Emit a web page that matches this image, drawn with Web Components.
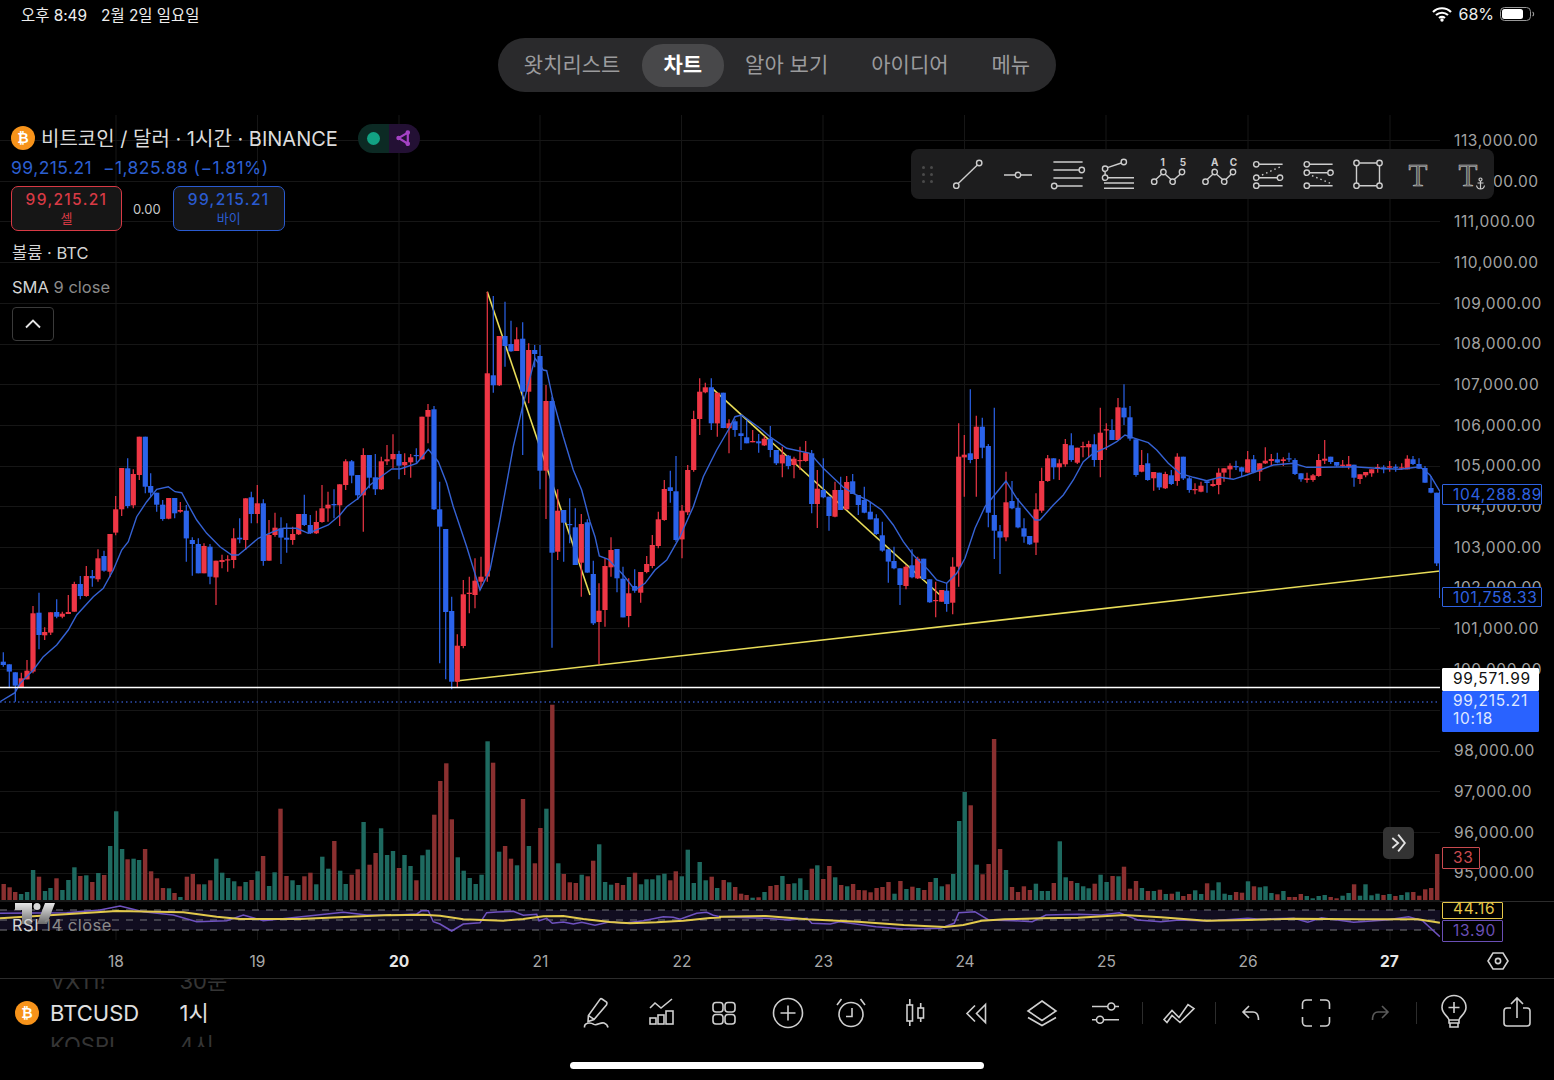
<!DOCTYPE html>
<html lang="ko">
<head>
<meta charset="utf-8">
<title>BTCUSD</title>
<style>
    html, body { margin: 0; background: #000; }
    body {
        display: flex;
        flex-direction: column;
        width: 1554px;
        height: 1080px;
        overflow: hidden;
        font-family: Inter, "Noto Sans CJK KR", sans-serif;
        color: #ddd;
    }
    .dim { color: #8a8a8a; }
    .spread { margin-right: 1px; }
</style>
</head>
<body>
<status-bar>
    <span slot="left">오후 8:49</span>
    <span slot="left">2월 2일 일요일</span>
    <span slot="right">68%</span>
</status-bar>

<nav-pill>
    <nav-tab>왓치리스트</nav-tab>
    <nav-tab active>차트</nav-tab>
    <nav-tab>알아 보기</nav-tab>
    <nav-tab>아이디어</nav-tab>
    <nav-tab>메뉴</nav-tab>
</nav-pill>

<chart-pane>
    <price-axis slot="axis">
        <value-tag top="369" width="100" height="21" tone="#2f62e0">104,288.89</value-tag>
        <value-tag top="472" width="100" height="20" tone="#2f62e0" style="--pt:2px">101,758.33</value-tag>
        <value-tag top="553" width="97" height="23" tone="#fff" fill="#fff" ink="#111" style="--pb:2px">99,571.99</value-tag>
        <value-tag top="576" width="97" height="41" tone="#2962ff" fill="#2962ff" ink="#dfe7ff" style="--pb:3px">99,215.21<br>10:18</value-tag>
        <value-tag top="732" width="38" height="22" tone="#c94a4f">33</value-tag>
        <value-tag top="787" width="61" height="17" tone="#e6c84a" style="--pb:3px">44.16</value-tag>
        <value-tag top="805" width="61" height="22" tone="#6a4fb5">13.90</value-tag>
    </price-axis>

    <chart-legend slot="overlay">
        <legend-title>비트코인 / 달러 · 1시간 · BINANCE</legend-title>
        <legend-line style="--mt:4px;--ink:#2c5fd0;--size:17.5px;--track:.45px">99,215.21&nbsp; −1,825.88 (−1.81%)</legend-line>
        <quote-row style="--mt:7px">
            <quote-box tone="#d83a45" label="셀" style="--w:111px">99,215.21</quote-box>
            <span class="spread">0.00</span>
            <quote-box tone="#2a5bd0" label="바이">99,215.21</quote-box>
        </quote-row>
        <legend-line style="--mt:11px;--ml:1px">볼륨 · BTC</legend-line>
        <legend-line style="--mt:12px;--ml:1px">SMA <span class="dim">9 close</span></legend-line>
        <collapse-button style="--mt:9px"></collapse-button>
    </chart-legend>

    <draw-toolbar slot="overlay"></draw-toolbar>
    <next-button slot="overlay"></next-button>
    <tv-logo slot="overlay"></tv-logo>
    <rsi-label slot="overlay">RSI <span class="dim">14 close</span></rsi-label>
</chart-pane>

<time-axis></time-axis>
<bottom-bar></bottom-bar>

<script>
// scale and offset of the crops the chart was read from
const CANDLE_SETS = [
    { x0: 0, xs: 3, y0: 400, ys: 3, data: `10b785,795,757,800 28b793,815,793,865 46b817,857,817,905 64r835,862,818,862 81r812,838,780,838 99r640,815,618,820 117b638,705,578,748 134r696,706,682,720 152r637,698,637,705 170b636,650,598,655 187r641,650,635,655 205r636,642,585,640 223r552,635,545,635 241b552,588,528,598 259r528,588,498,590 277b528,535,510,560 294r475,538,448,545 312b468,512,452,515 330r402,515,402,532 347r328,398,288,406 365r204,328,204,348 383b205,318,175,325 400r222,316,208,325 418r110,225,110,240 436b110,260,110,280 452b258,278,220,290 470b278,314,278,335 488b314,357,300,362 506r294,356,294,358 524b294,340,294,355 541r330,335,306,338 559b332,415,315,485 577b420,432,412,527 595b432,520,415,520 612r438,520,430,520 630b440,530,432,553 648r482,532,482,615 666r480,486,464,505 683r478,481,466,515 701r415,480,385,505 719b413,418,355,430 737r295,420,295,450 754b292,342,275,370 772r310,342,255,370 790b310,483,298,497 807r405,482,360,482 825r383,405,338,410 843b385,413,352,492 860b413,419,370,458 878r402,420,380,434 896r342,403,342,405 913b342,375,284,378 931b375,400,345,402 949r366,400,332,402 966r325,366,255,368 984r314,325,275,365 1002b312,316,268,355 1019r253,316,253,378 1037r184,255,178,270 1055b184,227,180,250 1073b225,286,225,300 1090r165,286,145,395 1108b165,233,165,265 1126b232,268,162,285 1144r184,268,170,270 1161r178,184,135,195 1179r162,178,103,205 1197b162,197,152,238 1214r186,196,160,225 1232r172,187,162,233 1249b165,168,145,188 1266r50,178,50,178 1284r30,50,12,130 1302b28,328,18,330 1319b328,380,245,790 1337b387,636,387,838 1355b633,845,590,868 1372r737,845,703,862 1390r583,738,540,745 1408r578,582,530,640 1425r542,585,475,625 1443r530,545,470,565` },
    { x0: 480, xs: 3, y0: 280, ys: 3, data: `22r280,890,35,905 40b286,316,48,338 58r168,316,168,318 75b168,198,65,260 93b192,214,122,215 110r178,213,142,213 128b176,335,127,525 146r210,335,190,370 164b210,222,195,262 180b228,572,195,628 198r363,572,315,717 216b363,818,350,1103 233r692,815,628,840 251b690,728,690,845 269b732,734,655,790 286b742,855,685,855 304r732,848,702,950 322b727,878,718,878 340b882,1030,842,1035 357r992,1026,910,1152 375r858,990,835,1040 393r810,862,772,890 411b807,895,807,937 429b896,1012,860,1012 446r940,1008,895,1042 464b918,932,868,938 482r876,938,876,968 500r852,876,828,880 517r795,858,765,865 535r718,798,695,805 553r627,720,600,722 571b622,633,572,668 588b634,780,528,785 606r692,778,675,835 623r570,697,555,705 641r417,570,392,575 659r335,417,295,465 676r322,337,308,340 694b322,430,295,450 712r338,430,338,470 730b338,444,338,445 747r430,445,418,520 765b424,450,418,470 783b460,468,405,510 800b472,490,420,490 818r483,487,450,487 836b484,490,462,518 853r476,496,468,498 871b476,510,438,532 889b510,550,510,555 907r524,550,500,592 925b527,558,525,568 942r536,555,530,595 960r540,543,500,570 977r518,543,483,545 995b520,672,510,700 1012r626,672,570,744 1030b630,652,535,655 1047b650,708,650,752 1065r630,710,605,712 1082b630,690,590,690 1100r606,688,588,690 1118b604,642,582,642 1135b645,675,645,705 1153b660,698,620,700 1171b695,718,665,718 1189b715,762,703,765 1207b766,812,725,815 1225b808,845,808,908 1242b843,865,800,868 1260b865,915,865,975 1278r860,918,855,928 1296b856,892,808,895 1313r836,895,830,897 1331b836,897,836,900 1349b898,967,898,968 1367r960,963,905,1012` },
    { x0: 940, xs: 3, y0: 370, ys: 3, data: `5r660,695,660,695 20b662,702,640,725 38r590,698,562,733 56r260,590,160,650 73r254,262,195,380 91b250,270,58,280 109r170,267,137,380 127b170,233,143,265 145b228,428,222,472 163b435,482,113,567 180b484,503,465,612 198r397,502,305,514 216b393,415,333,418 234b413,472,385,475 252b475,500,445,518 269b498,523,498,525 288r418,518,370,555 305r333,422,293,428 323r265,333,255,335 341b265,292,265,328 358r280,292,268,330 376r222,283,207,290 394b226,270,190,275 412r233,278,233,282 429r228,232,215,262 446r222,232,212,262 463b223,270,193,290 481r188,270,113,322 499r178,181,160,240 516b180,210,148,210 534r112,210,84,210 552b113,142,43,165 570b142,206,108,212 588b208,315,208,320 605r285,305,240,307 623b280,330,250,332 641r306,325,306,362 658b308,352,308,360 676r312,355,305,357 694b316,342,300,345 712r260,333,250,347 730b260,325,260,330 748b325,360,320,368 765r357,361,340,373 783r347,365,335,367 801b334,339,334,368 819r342,348,328,350 836r308,345,295,373 852r295,308,295,335 870r287,298,280,325 888b288,292,272,300 905b292,305,290,318 923r268,308,243,308 941b268,307,255,310 959r280,305,280,333 976r272,280,232,282 994r267,273,252,288 1012b268,278,248,280 1030r268,273,262,288 1047b265,268,248,276 1065b270,312,265,315 1083b310,328,310,335 1101r325,330,308,338 1119r316,330,312,335 1136r270,318,252,320 1154r266,272,210,282 1172b260,276,260,282 1190b276,287,276,290 1208r284,287,270,292 1226r283,290,258,298 1242b284,323,284,350 1260r313,327,313,342 1277r306,316,306,322 1295r298,310,298,320 1313r291,295,282,308 1331b292,298,286,310 1349r289,293,273,305 1367b290,293,283,305 1385r292,296,280,300 1402r266,298,256,298 1419b268,282,258,285 1437b282,296,265,297 1455b294,338,288,338 1473b354,368,318,370 1490b368,580,368,588` }
];

const VOLUME_SETS = [
    { x0: 0, xs: 2.178, y0: 700, ys: 3, data: `8r552 21r562 33r576 46g582 59g576 72g510 85r530 98g573 110g564 123r535 136g570 149g540 162g502 175r528 188g526 201r546 214g519 227r525 240g438 253g334 266g447 278r478 291g476 303g480 316r447 329r514 342r535 355r564 368g565 380r579 393g591 407r530 420r522 433r553 445g553 458r541 471g476 484g518 497g534 510g544 522r559 535g546 548r540 561g514 573r468 586g558 598g517 611r326 624r528 637g541 650g555 663r529 676r518 689g553 702g470 715g506 728r423 741g512 753g552 766r524 779r508 792g366 805r494 818r459 830g385 843g465 856g453 869r504 881g465 894g498 907r541 920g466 932g449 946r344 959r243 972r190 984r358 997g472 1010g512 1023g534 1036g552 1049g524 1062g124 1074r188 1087g455 1100r438 1113r476 1126g496 1139r297 1152g438 1165r490 1177r384 1190g326 1203r14 1216g490 1228r522 1241r547 1254r549 1267g524 1280r529 1292r482 1305g433 1318g546 1331g554 1344r549 1357r555 1370g531 1383r518 1396g553 1408g538 1421g538 1434g526 1447g521 1460r541 1472r514 1485g529 1498g449 1511g549 1524g486 1537g541 1550r530 1562g564` },
    { x0: 720, xs: 2.178, y0: 730, ys: 3, data: `8r450 20g457 33r471 46r491 58r495 71g503 84r502 97g486 110r468 123r465 136g438 149r462 162g460 175g445 188g480 200r416 212g406 225r447 238r408 251g442 264r465 277g469 290r462 302r480 315r481 328r487 341r474 354r471 367r456 380g491 393r453 406g477 419r470 432g474 445r480 458r456 470g444 483g469 496r463 508g432 521g273 533g186 546r226 559g404 572r433 585r402 597r27 610r357 623g420 636r471 649r486 662r469 675r480 688g461 701g483 714g483 727r459 740g334 753g442 765r453 778g459 791g469 803g475 816r461 829g434 842g456 855r438 868g439 880r410 893r476 906r453 919g474 932r483 945g483 958r479 971g492 984r491 997g485 1009r498 1022r492 1035g481 1048g492 1061r460 1073g481 1086g457 1099g491 1111g495 1124r486 1137r488 1150g454 1163r469 1176g472 1188g469 1201g489 1214r493 1227g483 1240r501 1252r501 1265r492 1278g498 1291g505 1304g498 1317g495 1330r501 1343r505 1356g497 1369g489 1381r463 1394g497 1406g463 1419g496 1432g491 1445r495 1458g492 1471r498 1484g495 1497g487 1510r486 1523r497 1536r478 1549r474 1562r372` }
];

const SMA_PARTS = [
    [0, 3, 400, 3, '0,905 45,878 60,850 100,810 130,770 170,735 205,690 230,645 280,590 310,565 340,510 365,450 385,425 410,350 440,305 470,268 505,260 525,275 545,278 565,315 590,360 620,400 660,440 695,465 715,465 745,440 775,415 820,395 850,385 890,385 925,400 960,385 985,375 1020,345 1040,320 1075,295 1110,255 1150,225 1175,207 1200,207 1250,190 1285,148 1315,185 1340,250 1360,320 1400,440 1440,570'],
    [480, 3, 280, 3, '0,930 30,870 60,720 100,500 130,370 165,235 190,270 200,272 218,355 250,470 280,570 305,630 330,725 345,770 358,828 385,838 430,885 465,930 495,910 525,870 560,840 600,770 640,680 670,590 710,510 745,450 765,410 785,405 840,445 870,470 920,505 990,520 1030,565 1090,622 1120,640 1165,662 1205,690 1240,735 1270,785 1300,825 1345,870 1370,900'],
    [940, 3, 370, 3, '20,640 50,610 75,565 105,475 135,410 198,333 230,385 285,450 300,450 340,405 370,375 400,330 430,275 460,250 500,232 530,215 555,195 585,205 625,218 650,240 685,280 720,310 760,322 800,332 840,322 880,328 920,315 960,300 1000,285 1060,280 1100,292 1150,292 1240,290 1310,295 1380,298 1440,290 1470,315 1500,365']
];

const RSI_YELLOW = [
    [0, 3, 880, 3, '0,115 160,105 350,93 550,97 650,110 720,117 900,117 1050,110 1170,105'],
    [390, 3, 900, 3, '0,46 100,44 150,47 220,58 340,62 400,57 460,49 520,48 580,57 660,66 720,70 800,67 880,62 960,54 990,53'],
    [720, 2.178, 730, 3, '0,560 100,558 190,568 300,575 400,585 490,591 530,585 570,572 620,568 700,565 780,563 880,555 960,562 1060,572 1150,570 1250,566 1400,568 1520,568 1568,578']
];

const RSI_PURPLE = [
    [0, 3, 880, 3, '0,100 200,98 300,90 360,78 430,95 520,105 590,125 680,122 730,105 790,122 890,112 1030,97 1100,105 1170,105'],
    [390, 3, 900, 3, '0,46 80,42 95,32 115,32 130,65 150,72 185,93 220,72 270,68 290,38 320,36 370,34 400,46 440,43 447,62 470,55 487,70 520,66 550,72 575,67 615,76 660,65 700,70 760,62 820,50 850,52 870,58 920,40 950,37 970,46 990,50'],
    [720, 2.178, 730, 3, '0,560 100,565 150,570 190,565 200,580 240,582 260,575 340,590 400,597 480,595 510,580 520,548 555,545 585,570 640,572 680,575 710,555 780,553 830,555 870,548 910,570 960,575 1000,570 1060,573 1150,565 1170,567 1250,565 1280,577 1310,563 1380,577 1450,570 1500,560 1530,572 1568,620']
];

const DAY_X = [116, 257.5, 399, 540, 681.5, 823, 964.5, 1106, 1248, 1390];
const knob = (x, y, r = 2.7) => `<circle cx="${x}" cy="${y}" r="${r}"/>`;

const ICONS = {
    // drawing toolbar
    trend: `<path d="M-9.8 9.6 L9.4 -9"/>${knob(11.2, -11)}${knob(-11.7, 11.7)}`,
    ray: `<path d="M-14 1 H-2.5 M2.5 1 H14"/>${knob(0, 1)}`,
    channel: `<path d="M-14.6 -12 H14.6 M-14.6 -4 H11 M-14.6 4 H14.6 M-11 12 H14.6"/>${knob(13.8, -4)}${knob(-13.8, 12)}`,
    fib: `<path d="M3.3 -11 L-10.5 -6.3 M-12.9 -2.6 V1 M-10 3.7 H16 M-14 9 H16 M-14 14.3 H16"/>${knob(5.8, -12)}${knob(-12.9, -5.3)}${knob(-12.9, 3.7)}`,
    xabcd: `<path d="M-12.2 5.6 L-6.2 0 M-3 0 L3 5.6 M6.2 5.6 L12.4 0"/>${knob(-13.8, 7.7)}${knob(-4.6, -2)}${knob(4.6, 7.7)}${knob(14, -2)}<text x="-5.4" y="-8" class="mini">1</text><text x="15" y="-8" class="mini">5</text>`,
    abcd: `<path d="M-10.9 5.6 L-4.9 0 M-1.7 0 L4.6 5.6 M7.8 5.6 L13.4 0"/>${knob(-12.5, 7.7)}${knob(-3.3, -2)}${knob(6.2, 7.7)}${knob(15, -2)}<text x="-3.3" y="-8" class="mini">A</text><text x="15.4" y="-8" class="mini">C</text>`,
    pitch: `<path d="M-9 -9.7 H14.6 M-9 3.7 H9.3 M-9 11.7 H14.6"/><path d="M-6 1 L12.5 -7.3" stroke-dasharray="1.5 3"/>${knob(-11.7, -9.7)}${knob(-11.7, 3.7)}${knob(12, 3.7)}${knob(-11.7, 11.7)}`,
    pitchfan: `<path d="M-8.5 -9.7 H14.6 M-8.5 -1.3 H9.8 M-8.5 11.7 H14.6"/><path d="M-6 1.7 L12.5 9.3" stroke-dasharray="1.5 3"/>${knob(-11.2, -9.7)}${knob(-11.2, -1.3)}${knob(12.5, -1.3)}${knob(-11.2, 11.7)}`,
    rect: `<path d="M-9 -11 H9 M-9 11.7 H9 M-11.5 -8.4 V9 M11.5 -8.4 V9"/>${knob(-11.5, -11)}${knob(11.5, -11)}${knob(-11.5, 11.7)}${knob(11.5, 11.7)}`,
    text: `<text x="0" y="11.5" class="big">T</text>`,
    anchored: `<text x="0" y="11.5" class="big">T</text><g stroke-width="1.2" transform="translate(6.5 0)"><circle cx="6" cy="5.5" r="1.5"/><path d="M6 7 V15 M3 9 H9 M2 11.5 C2.5 14 4.5 15 6 15 C7.5 15 9.5 14 10 11.5"/></g>`,
    // bottom bar
    pen: `<path d="M5 -14 L9.5 -11 C10.2 -10 10 -9 9.4 -8 L-3 6.5 L-9 8.5 L-8.6 2.6 L3 -13.6 C3.6 -14.4 4.4 -14.4 5 -14 Z M-8 2.8 L-3 6.4"/><path d="M-12.5 14.5 C-13 9.5 -7 9 -3 11.4 C0 13 3.4 9 7 10 C9.4 11 10.6 12.5 11 14.5"/>`,
    indicators: `<path d="M-11 -5 L-6 -10 L0 -5 L11 -14"/><rect x="-11" y="5" width="6" height="6"/><rect x="-3" y="2" width="6" height="9"/><rect x="5" y="-2" width="7" height="13"/>`,
    grid: `<rect x="-11" y="-10.5" width="10" height="9.5" rx="3"/><rect x="1" y="-10.5" width="10" height="9.5" rx="3"/><rect x="-11" y="1.5" width="10" height="9.5" rx="3"/><rect x="1" y="1.5" width="10" height="9.5" rx="3"/>`,
    plus: `<circle r="14.5"/><path d="M0 -7.5 V7.5 M-7.5 0 H7.5"/>`,
    alarm: `<circle cy="1.5" r="12"/><path d="M1 -5 V3.5 H-5 M-14 -8 L-9.5 -14 M14 -8 L9.5 -14"/>`,
    candles: `<rect x="-8" y="-8" width="5.5" height="16"/><rect x="3" y="-5" width="5.5" height="10"/><path d="M-5.2 -14 V-8 M-5.2 8 V13 M5.7 -10 V-5 M5.7 5 V9"/>`,
    rewind: `<path d="M-3 -7.5 L-11 .5 L-3 8.5 M7.5 -8.5 L-1.5 .5 L7.5 9.5 Z"/>`,
    layers: `<path d="M0 -12 L14 -2 L0 7.5 L-14 -2 Z M-14 4.5 L0 12.5 L14 4.5"/>`,
    sliders: `<path d="M-13 -6.5 H2.8 M9.8 -6.5 H14 M-13 6.7 H-8.5 M-1.5 6.7 H14"/><circle cx="6.3" cy="-6.5" r="3.5"/><circle cx="-5" cy="6.7" r="3.5"/>`,
    zigzag: `<path d="M-15 6.5 L-7 -2.5 L0 4.5 L9 -8.5 L15 -4.5 L1 9.5 L-7 2.5 L-12 9.5 Z"/>`,
    undo: `<path d="M-3 -7 L-9 -1 L-3 5 M-9 -1 H1 C4.5 -1 6.5 2 6.5 7"/>`,
    frame: `<path d="M-4 -13 H-9.5 A4 4 0 0 0 -13.5 -9 V-4 M4 -13 H9.5 A4 4 0 0 1 13.5 -9 V-4 M-4 13 H-9.5 A4 4 0 0 1 -13.5 9 V4 M4 13 H9.5 A4 4 0 0 0 13.5 9 V4"/>`,
    redo: `<path d="M3 -7 L9 -1 L3 5 M9 -1 H-1 C-4.5 -1 -6.5 2 -6.5 7"/>`,
    bulb: `<path d="M-5 7 C-5 4 -12 1 -12 -5.5 A12 12 0 0 1 12 -5.5 C12 1 5 4 5 7 Z M-5 7 V10 H5 V7 M-4 10 V14 H4 V10 M0 -11 V0 M-5.5 -5.5 H5.5"/>`,
    share: `<path d="M-6 -5 H-10 A3 3 0 0 0 -13 -2 V10 A3 3 0 0 0 -10 13 H10 A3 3 0 0 0 13 10 V-2 A3 3 0 0 0 10 -5 H6 M0 5 V-15 M-6 -9 L0 -15 L6 -9"/>`,
    hexgear: `<path d="M-5 -8 H5 L10 0 L5 8 H-5 L-10 0 Z"/><circle r="2.6"/>`,
    chevrons: `<path d="M-8 -6 L-1 0 L-8 6 M-1 -10 L7 0 L-1 10"/>`,
    chevronUp: `<path d="M-7 3.5 L0 -3.5 L7 3.5"/>`
};

const TOOLBAR = ['trend', 'ray', 'channel', 'fib', 'xabcd', 'abcd', 'pitch', 'pitchfan', 'rect', 'text', 'anchored'];

function points(parts) {
    return parts.map(([x0, xs, y0, ys, list]) => list.split(' ').map(p => {
        const [x, y] = p.split(',').map(Number);
        return `${(x0 + x / xs).toFixed(1)},${(y0 + y / ys).toFixed(1)}`;
    }).join(' ')).join(' ');
}

class StatusBar extends HTMLElement {
    constructor() {
        super();
        this.attachShadow({ mode: 'open' });
    }

    connectedCallback() {
        this.shadowRoot.innerHTML = `
            <style>
                :host {
                    display: flex;
                    align-items: center;
                    justify-content: space-between;
                    height: 30px;
                    box-sizing: border-box;
                    padding: 0 19px 2px 21px;
                    font-size: 15.4px;
                    color: #eee;
                }
                .side { display: flex; align-items: center; }
                .left { gap: 14px; }
                .right { gap: 6px; font-size: 16px; }
                svg { display: block; }
            </style>
            <div class="side left"><slot name="left"></slot></div>
            <div class="side right">
                <svg width="20" height="16" viewBox="0 0 20 16">
                    <path d="M1 6 C6 1 14 1 19 6 M4 9 C7.5 6 12.5 6 16 9 M7 12 C8.8 10.6 11.2 10.6 13 12" fill="none" stroke="#fff" stroke-width="2.2"/>
                    <circle cx="10" cy="14" r="1.7" fill="#fff"/>
                </svg>
                <slot name="right"></slot>
                <svg width="35" height="16" viewBox="0 0 35 16">
                    <rect x=".5" y="1.5" width="30" height="13" rx="4" fill="none" stroke="#999"/>
                    <rect x="2" y="3" width="21" height="10" rx="2.5" fill="#fff"/>
                    <path d="M32.5 6 C34 6.5 34 9.5 32.5 10" fill="none" stroke="#999" stroke-width="1.2"/>
                </svg>
            </div>
        `;
    }
}

class NavPill extends HTMLElement {
    constructor() {
        super();
        this.attachShadow({ mode: 'open' });
    }

    connectedCallback() {
        this.shadowRoot.innerHTML = `
            <style>
                :host {
                    display: flex;
                    justify-content: center;
                    height: 77px;
                    padding-top: 8px;
                }
                .pill {
                    display: flex;
                    align-items: center;
                    height: 54px;
                    box-sizing: border-box;
                    padding: 0 4px;
                    border-radius: 27px;
                    background: #2a2a2c;
                }
            </style>
            <div class="pill"><slot></slot></div>
        `;
    }
}

class NavTab extends HTMLElement {
    constructor() {
        super();
        this.attachShadow({ mode: 'open' });
    }

    connectedCallback() {
        this.shadowRoot.innerHTML = `
            <style>
                :host {
                    display: flex;
                    align-items: center;
                    height: 43px;
                    box-sizing: border-box;
                    padding: 0 21.5px 4px;
                    border-radius: 21px;
                    font-size: 21px;
                    color: #9b9b9d;
                }
                :host([active]) {
                    background: #48484a;
                    color: #fff;
                    font-weight: 700;
                }
            </style>
            <slot></slot>
        `;
    }
}

class ChartPane extends HTMLElement {
    constructor() {
        super();
        this.attachShadow({ mode: 'open' });
    }

    connectedCallback() {
        this.shadowRoot.innerHTML = `
            <style>
                :host {
                    display: flex;
                    position: relative;
                    height: 825px;
                    flex: none;
                }
            </style>
            <price-chart></price-chart>
            <slot name="axis"></slot>
            <slot name="overlay"></slot>
        `;
    }
}

class PriceChart extends HTMLElement {
    constructor() {
        super();
        this.attachShadow({ mode: 'open' });
    }

    connectedCallback() {
        this.shadowRoot.innerHTML = `
            <style>
                :host { display: block; width: 1440px; height: 825px; flex: none; }
                svg { display: block; }
            </style>
            <svg width="1440" height="825" viewBox="0 115 1440 825">${this.drawing()}</svg>
        `;
    }

    drawing() {
        let out = '';

        // grid
        DAY_X.forEach(x => {
            out += `<path d="M${x} 115 V940" stroke="#161616"/>`;
        });
        for (let i = 0; i < 19; i++) {
            const y = Math.round(140 + i * 40.7) + .5;
            out += `<path d="M0 ${y} H1440" stroke="#161616"/>`;
        }

        // volume
        VOLUME_SETS.forEach(set => {
            for (const m of set.data.matchAll(/(\d+)([rg])(\d+)/g)) {
                const x = set.x0 + m[1] / set.xs;
                const top = set.y0 + m[3] / set.ys;
                out += `<rect x="${(x - 2.2).toFixed(1)}" y="${top.toFixed(1)}" width="4.4" height="${(900 - top).toFixed(1)}" fill="${m[2] === 'r' ? '#8a3030' : '#1e6a60'}"/>`;
            }
        });
        out += '<path d="M0 901 H1440" stroke="#2c2c2c"/>';

        // rsi pane
        out += '<rect x="0" y="910" width="1440" height="20" fill="#110d20"/>';
        [910, 920, 930].forEach(y => {
            out += `<path d="M0 ${y} H1440" stroke="#77777c" stroke-dasharray="7 7"/>`;
        });
        out += `<polyline points="${points(RSI_PURPLE)}" fill="none" stroke="#6f52c0" stroke-width="1.5"/>`;
        out += `<polyline points="${points(RSI_YELLOW)}" fill="none" stroke="#e2c94c" stroke-width="1.9"/>`;

        // drawn trend lines sit under the candles
        const trend = 'fill="none" stroke="#e8dc58" stroke-width="1.6"';
        out += `<path d="M487.3 291.7 L590 595" ${trend}/>`;
        out += `<path d="M713.3 389.3 L940 595" ${trend}/>`;
        out += `<path d="M456 681 L1440 571" ${trend}/>`;

        // candles
        CANDLE_SETS.forEach(set => {
            for (const m of set.data.matchAll(/(\d+)([rb])(\d+),(\d+),(\d+),(\d+)/g)) {
                const x = set.x0 + m[1] / set.xs;
                const [top, bot, hi, lo] = [m[3], m[4], m[5], m[6]].map(v => set.y0 + v / set.ys);
                const col = m[2] === 'r' ? '#ee3645' : '#2b63ea';
                out += `<path d="M${x.toFixed(1)} ${hi.toFixed(1)} V${lo.toFixed(1)}" stroke="${col}" stroke-width="1.2"/>`;
                out += `<rect x="${(x - 2.6).toFixed(1)}" y="${top.toFixed(1)}" width="5.2" height="${Math.max(bot - top, 1.2).toFixed(1)}" fill="${col}"/>`;
            }
        });

        out += `<polyline points="${points(SMA_PARTS)}" fill="none" stroke="#3562d4" stroke-width="1.4"/>`;

        // price lines
        out += '<path d="M1439.5 492 V598" stroke="#2f62e0"/>';
        out += '<path d="M0 702 H1440" stroke="#2f4fb0" stroke-width="1.4" stroke-dasharray="1.5 3"/>';
        out += '<path d="M0 687.5 H1440" stroke="#fff" stroke-width="1.6"/>';
        return out;
    }
}

class PriceAxis extends HTMLElement {
    constructor() {
        super();
        this.attachShadow({ mode: 'open' });
    }

    connectedCallback() {
        const rows = [];
        for (let p = 113; p >= 95; p--) {
            rows.push(`<div class="row">${p},000.00</div>`);
        }
        this.shadowRoot.innerHTML = `
            <style>
                :host {
                    display: flex;
                    flex-direction: column;
                    position: relative;
                    width: 114px;
                    height: 825px;
                    box-sizing: border-box;
                    padding-top: 5px;
                    font-size: 15.5px;
                    color: #a3a3a3;
                }
                .row {
                    flex: none;
                    display: flex;
                    align-items: center;
                    height: 40.7px;
                    padding-left: 14px;
                    letter-spacing: .6px;
                }
                .sep {
                    position: absolute;
                    left: 0;
                    right: 0;
                    top: 786px;
                    height: 1px;
                    background: #2c2c2c;
                }
            </style>
            ${rows.join('')}
            <div class="sep"></div>
            <slot></slot>
        `;
    }
}

class ValueTag extends HTMLElement {
    constructor() {
        super();
        this.attachShadow({ mode: 'open' });
    }

    connectedCallback() {
        const tone = this.getAttribute('tone');
        const fill = this.getAttribute('fill') || '#000';
        const ink = this.getAttribute('ink') || tone;
        this.shadowRoot.innerHTML = `
            <style>
                :host {
                    position: absolute;
                    left: 2px;
                    top: ${this.getAttribute('top')}px;
                    width: ${this.getAttribute('width')}px;
                    height: ${this.getAttribute('height')}px;
                    box-sizing: border-box;
                    display: flex;
                    align-items: center;
                    padding: var(--pt, 0) 0 var(--pb, 0) 10px;
                    border: 1px solid ${tone};
                    border-radius: 1px;
                    background: ${fill};
                    color: ${ink};
                    font-size: 15.5px;
                    line-height: 18px;
                    letter-spacing: .75px;
                }
            </style>
            <div><slot></slot></div>
        `;
    }
}

class ChartLegend extends HTMLElement {
    constructor() {
        super();
        this.attachShadow({ mode: 'open' });
    }

    connectedCallback() {
        this.shadowRoot.innerHTML = `
            <style>
                :host {
                    position: absolute;
                    left: 11px;
                    top: 8px;
                    display: flex;
                    flex-direction: column;
                    align-items: flex-start;
                }
            </style>
            <slot></slot>
        `;
    }
}

class CoinIcon extends HTMLElement {
    constructor() {
        super();
        this.attachShadow({ mode: 'open' });
    }

    connectedCallback() {
        this.shadowRoot.innerHTML = `
            <style>
                :host {
                    display: flex;
                    flex: none;
                    align-items: center;
                    justify-content: center;
                    width: 24px;
                    height: 24px;
                    border-radius: 50%;
                    background: #f7931a;
                    color: #fff;
                    font: 700 14px "DejaVu Sans", sans-serif;
                }
            </style>
            ₿
        `;
    }
}

class LegendTitle extends HTMLElement {
    constructor() {
        super();
        this.attachShadow({ mode: 'open' });
    }

    connectedCallback() {
        this.shadowRoot.innerHTML = `
            <style>
                :host {
                    display: flex;
                    align-items: center;
                    height: 30px;
                    font-size: 20px;
                    color: #dcdcdc;
                }
                coin-icon { margin-right: 6px; }
                .label { padding-bottom: 2px; }
                .badges {
                    display: flex;
                    margin-left: 20px;
                    height: 29px;
                    border-radius: 15px;
                    overflow: hidden;
                }
                .badge { display: flex; align-items: center; justify-content: center; width: 31px; }
                .green { background: #0c2a24; }
                .purple { background: #231034; }
                .dot { width: 13px; height: 13px; border-radius: 50%; background: #12a283; }
            </style>
            <coin-icon></coin-icon>
            <div class="label"><slot></slot></div>
            <div class="badges">
                <div class="badge green"><div class="dot"></div></div>
                <div class="badge purple">
                    <svg width="18" height="18" viewBox="-9 -9 18 18" fill="#a442c4" stroke="#a442c4" stroke-width="2.2">
                        <path d="M3.8 -5.4 L-5.4 0 L3.8 5.8 Z" fill="none"/>
                        <circle cx="3.8" cy="-5.4" r="1.2"/><circle cx="-5.4" cy="0" r="1.2"/><circle cx="3.8" cy="5.8" r="1.2"/>
                    </svg>
                </div>
            </div>
        `;
    }
}

class LegendLine extends HTMLElement {
    constructor() {
        super();
        this.attachShadow({ mode: 'open' });
    }

    connectedCallback() {
        this.shadowRoot.innerHTML = `
            <style>
                :host {
                    display: block;
                    height: 22px;
                    line-height: 22px;
                    margin-top: var(--mt, 0);
                    margin-left: var(--ml, 0);
                    font-size: var(--size, 16.5px);
                    letter-spacing: var(--track, 0);
                    color: var(--ink, #d4d4d4);
                    white-space: nowrap;
                }
            </style>
            <slot></slot>
        `;
    }
}

class QuoteRow extends HTMLElement {
    constructor() {
        super();
        this.attachShadow({ mode: 'open' });
    }

    connectedCallback() {
        this.shadowRoot.innerHTML = `
            <style>
                :host {
                    display: flex;
                    align-items: center;
                    gap: 11px;
                    margin-top: var(--mt, 0);
                    font-size: 13px;
                    color: #c8c8c8;
                }
            </style>
            <slot></slot>
        `;
    }
}

class QuoteBox extends HTMLElement {
    constructor() {
        super();
        this.attachShadow({ mode: 'open' });
    }

    connectedCallback() {
        const tone = this.getAttribute('tone');
        this.shadowRoot.innerHTML = `
            <style>
                :host {
                    display: flex;
                    flex-direction: column;
                    align-items: center;
                    justify-content: center;
                    width: var(--w, 112px);
                    height: 45px;
                    box-sizing: border-box;
                    padding-bottom: 2px;
                    border: 1.5px solid ${tone};
                    border-radius: 7px;
                    background: #161616;
                    color: ${tone};
                    font-size: 15.5px;
                    font-weight: 500;
                    letter-spacing: 1.35px;
                    line-height: 20px;
                }
                .label { font-size: 13px; line-height: 16px; letter-spacing: 0; font-weight: 400; }
            </style>
            <slot></slot>
            <div class="label">${this.getAttribute('label')}</div>
        `;
    }
}

class AppIcon extends HTMLElement {
    constructor() {
        super();
        this.attachShadow({ mode: 'open' });
    }

    connectedCallback() {
        const size = this.getAttribute('size') || 36;
        this.shadowRoot.innerHTML = `
            <style>
                :host {
                    display: flex;
                    flex: none;
                    align-items: center;
                    justify-content: center;
                    color: var(--icon, #cfcfcf);
                }
                svg { display: block; fill: var(--knob, none); stroke: currentColor; stroke-width: var(--sw, 1.5); overflow: visible; }
                .mini {
                    font: 700 10px Inter, sans-serif;
                    fill: currentColor;
                    stroke: none;
                    text-anchor: middle;
                }
                .big {
                    font: 400 31px "Liberation Serif", serif;
                    fill: rgba(205, 205, 205, .35);
                    stroke: currentColor;
                    stroke-width: .55;
                    text-anchor: middle;
                }
            </style>
            <svg width="${size}" height="${size}" viewBox="-18 -18 36 36">${ICONS[this.getAttribute('name')]}</svg>
        `;
    }
}

class DrawToolbar extends HTMLElement {
    constructor() {
        super();
        this.attachShadow({ mode: 'open' });
    }

    connectedCallback() {
        this.shadowRoot.innerHTML = `
            <style>
                :host {
                    position: absolute;
                    left: 911px;
                    top: 34px;
                    width: 583px;
                    height: 50px;
                    display: flex;
                    align-items: center;
                    box-sizing: border-box;
                    padding-left: 32px;
                    border-radius: 8px;
                    background: #1d1d1e;
                    --knob: #1d1d1e;
                    --icon: #cdcdcd;
                    --sw: 1.4;
                }
                .grip {
                    position: absolute;
                    left: 11px;
                    top: 17px;
                    display: grid;
                    grid-template-columns: 3px 3px;
                    gap: 4px 5px;
                }
                .grip i { width: 3px; height: 3px; border-radius: 50%; background: #4a4a4a; }
                app-icon { width: 50px; }
            </style>
            <div class="grip"><i></i><i></i><i></i><i></i><i></i><i></i></div>
            ${TOOLBAR.map(n => `<app-icon name="${n}"></app-icon>`).join('')}
        `;
    }
}

class NextButton extends HTMLElement {
    constructor() {
        super();
        this.attachShadow({ mode: 'open' });
    }

    connectedCallback() {
        this.shadowRoot.innerHTML = `
            <style>
                :host {
                    position: absolute;
                    left: 1383px;
                    top: 712px;
                    width: 31px;
                    height: 32px;
                    display: flex;
                    align-items: center;
                    justify-content: center;
                    border-radius: 5px;
                    background: #333;
                    --icon: #e4e4e4;
                    --sw: 2.2;
                }
            </style>
            <app-icon name="chevrons" size="30"></app-icon>
        `;
    }
}

class CollapseButton extends HTMLElement {
    constructor() {
        super();
        this.attachShadow({ mode: 'open' });
    }

    connectedCallback() {
        this.shadowRoot.innerHTML = `
            <style>
                :host {
                    display: flex;
                    align-items: center;
                    justify-content: center;
                    width: 42px;
                    height: 34px;
                    box-sizing: border-box;
                    margin-top: var(--mt, 0);
                    margin-left: 1px;
                    border: 1px solid #3a3a3a;
                    border-radius: 4px;
                    --icon: #e4e4e4;
                    --sw: 1.9;
                }
            </style>
            <app-icon name="chevronUp" size="36"></app-icon>
        `;
    }
}

class TvLogo extends HTMLElement {
    constructor() {
        super();
        this.attachShadow({ mode: 'open' });
    }

    connectedCallback() {
        this.shadowRoot.innerHTML = `
            <style>
                :host { position: absolute; left: 15px; top: 788px; width: 41px; height: 21px; }
                svg { display: block; }
            </style>
            <svg width="41" height="21" viewBox="0 0 41 21">
                <defs>
                    <linearGradient id="fade" x1="0" y1="0" x2="0" y2="1">
                        <stop offset="0" stop-color="#e8e8e8"/>
                        <stop offset="1" stop-color="#6a6a6a"/>
                    </linearGradient>
                </defs>
                <path d="M0 0 H17 V21 H7 V7 H0 Z M40 0 H30 L22 21 H32 Z" fill="url(#fade)"/>
                <circle cx="22" cy="3.5" r="3.5" fill="#d8d8d8"/>
            </svg>
        `;
    }
}

class RsiLabel extends HTMLElement {
    constructor() {
        super();
        this.attachShadow({ mode: 'open' });
    }

    connectedCallback() {
        this.shadowRoot.innerHTML = `
            <style>
                :host {
                    position: absolute;
                    left: 12px;
                    top: 799px;
                    font-size: 16.5px;
                    line-height: 22px;
                    letter-spacing: .5px;
                    color: #d4d4d4;
                }
            </style>
            <slot></slot>
        `;
    }
}

class TimeAxis extends HTMLElement {
    constructor() {
        super();
        this.attachShadow({ mode: 'open' });
    }

    connectedCallback() {
        const days = [18, 19, 20, 21, 22, 23, 24, 25, 26, 27];
        this.shadowRoot.innerHTML = `
            <style>
                :host {
                    display: grid;
                    grid-template-columns: repeat(10, 141.5px) 75.5px;
                    align-items: center;
                    flex: none;
                    height: 39px;
                    box-sizing: border-box;
                    padding: 3px 0 0 45.25px;
                    border-bottom: 1px solid #2c2c2c;
                    font-size: 15.5px;
                    color: #a8a8a8;
                }
                span { text-align: center; }
                .major { color: #e6e6e6; font-weight: 700; }
                app-icon { --icon: #d0d0d0; --sw: 1.6; }
            </style>
            ${days.map(d => `<span class="${d === 20 || d === 27 ? 'major' : ''}">${d}</span>`).join('')}
            <app-icon name="hexgear" size="36"></app-icon>
        `;
    }
}

class SymbolWheel extends HTMLElement {
    constructor() {
        super();
        this.attachShadow({ mode: 'open' });
    }

    connectedCallback() {
        const items = this.getAttribute('items').split('|');
        this.shadowRoot.innerHTML = `
            <style>
                :host {
                    display: flex;
                    flex-direction: column;
                    justify-content: center;
                    height: 68px;
                    overflow: hidden;
                    font-size: ${this.getAttribute('size') || 22}px;
                    color: #353535;
                }
                div { flex: none; height: 32px; line-height: 32px; white-space: nowrap; }
                .on { color: #e0e0e0; }
            </style>
            ${items.map((t, i) => `<div class="${i === 1 ? 'on' : ''}">${t}</div>`).join('')}
        `;
    }
}

class BottomBar extends HTMLElement {
    constructor() {
        super();
        this.attachShadow({ mode: 'open' });
    }

    connectedCallback() {
        const group = names => names.map(n => `<app-icon name="${n}"></app-icon>`).join('');
        this.shadowRoot.innerHTML = `
            <style>
                :host {
                    display: flex;
                    flex-direction: column;
                    align-items: center;
                    flex: 1;
                }
                .row {
                    display: flex;
                    align-items: center;
                    align-self: stretch;
                    height: 70px;
                    box-sizing: border-box;
                    padding: 0 5px 2px 15px;
                }
                coin-icon { margin-right: 11px; }
                .symbol { width: 129.5px; }
                .tools { display: flex; align-items: center; margin-left: auto; --sw: 1.6; }
                .tools app-icon { width: 63.5px; }
                .sep { width: 1px; height: 22px; margin: 0 5px; background: #2c2c2c; }
                .sep.tight { margin: 0 4.5px; }
                .off { --icon: #5a5a5a; }
                .home { width: 414px; height: 7px; margin-top: 13px; border-radius: 4px; background: #fff; }
            </style>
            <div class="row">
                <coin-icon></coin-icon>
                <symbol-wheel class="symbol" items="VXTI!|BTCUSD|KOSPI"></symbol-wheel>
                <symbol-wheel items="30분|1시|4시" size="22"></symbol-wheel>
                <div class="tools">
                    ${group(['pen', 'indicators', 'grid', 'plus', 'alarm', 'candles', 'rewind', 'layers', 'sliders'])}
                    <div class="sep tight"></div>
                    ${group(['zigzag'])}
                    <div class="sep tight"></div>
                    ${group(['undo', 'frame'])}
                    <app-icon class="off" name="redo"></app-icon>
                    <div class="sep"></div>
                    ${group(['bulb', 'share'])}
                </div>
            </div>
            <div class="home"></div>
        `;
    }
}

customElements.define('status-bar', StatusBar);
customElements.define('nav-pill', NavPill);
customElements.define('nav-tab', NavTab);
customElements.define('chart-pane', ChartPane);
customElements.define('price-chart', PriceChart);
customElements.define('price-axis', PriceAxis);
customElements.define('value-tag', ValueTag);
customElements.define('chart-legend', ChartLegend);
customElements.define('coin-icon', CoinIcon);
customElements.define('legend-title', LegendTitle);
customElements.define('legend-line', LegendLine);
customElements.define('quote-row', QuoteRow);
customElements.define('quote-box', QuoteBox);
customElements.define('app-icon', AppIcon);
customElements.define('draw-toolbar', DrawToolbar);
customElements.define('next-button', NextButton);
customElements.define('collapse-button', CollapseButton);
customElements.define('tv-logo', TvLogo);
customElements.define('rsi-label', RsiLabel);
customElements.define('time-axis', TimeAxis);
customElements.define('symbol-wheel', SymbolWheel);
customElements.define('bottom-bar', BottomBar);
</script>
</body>
</html>
